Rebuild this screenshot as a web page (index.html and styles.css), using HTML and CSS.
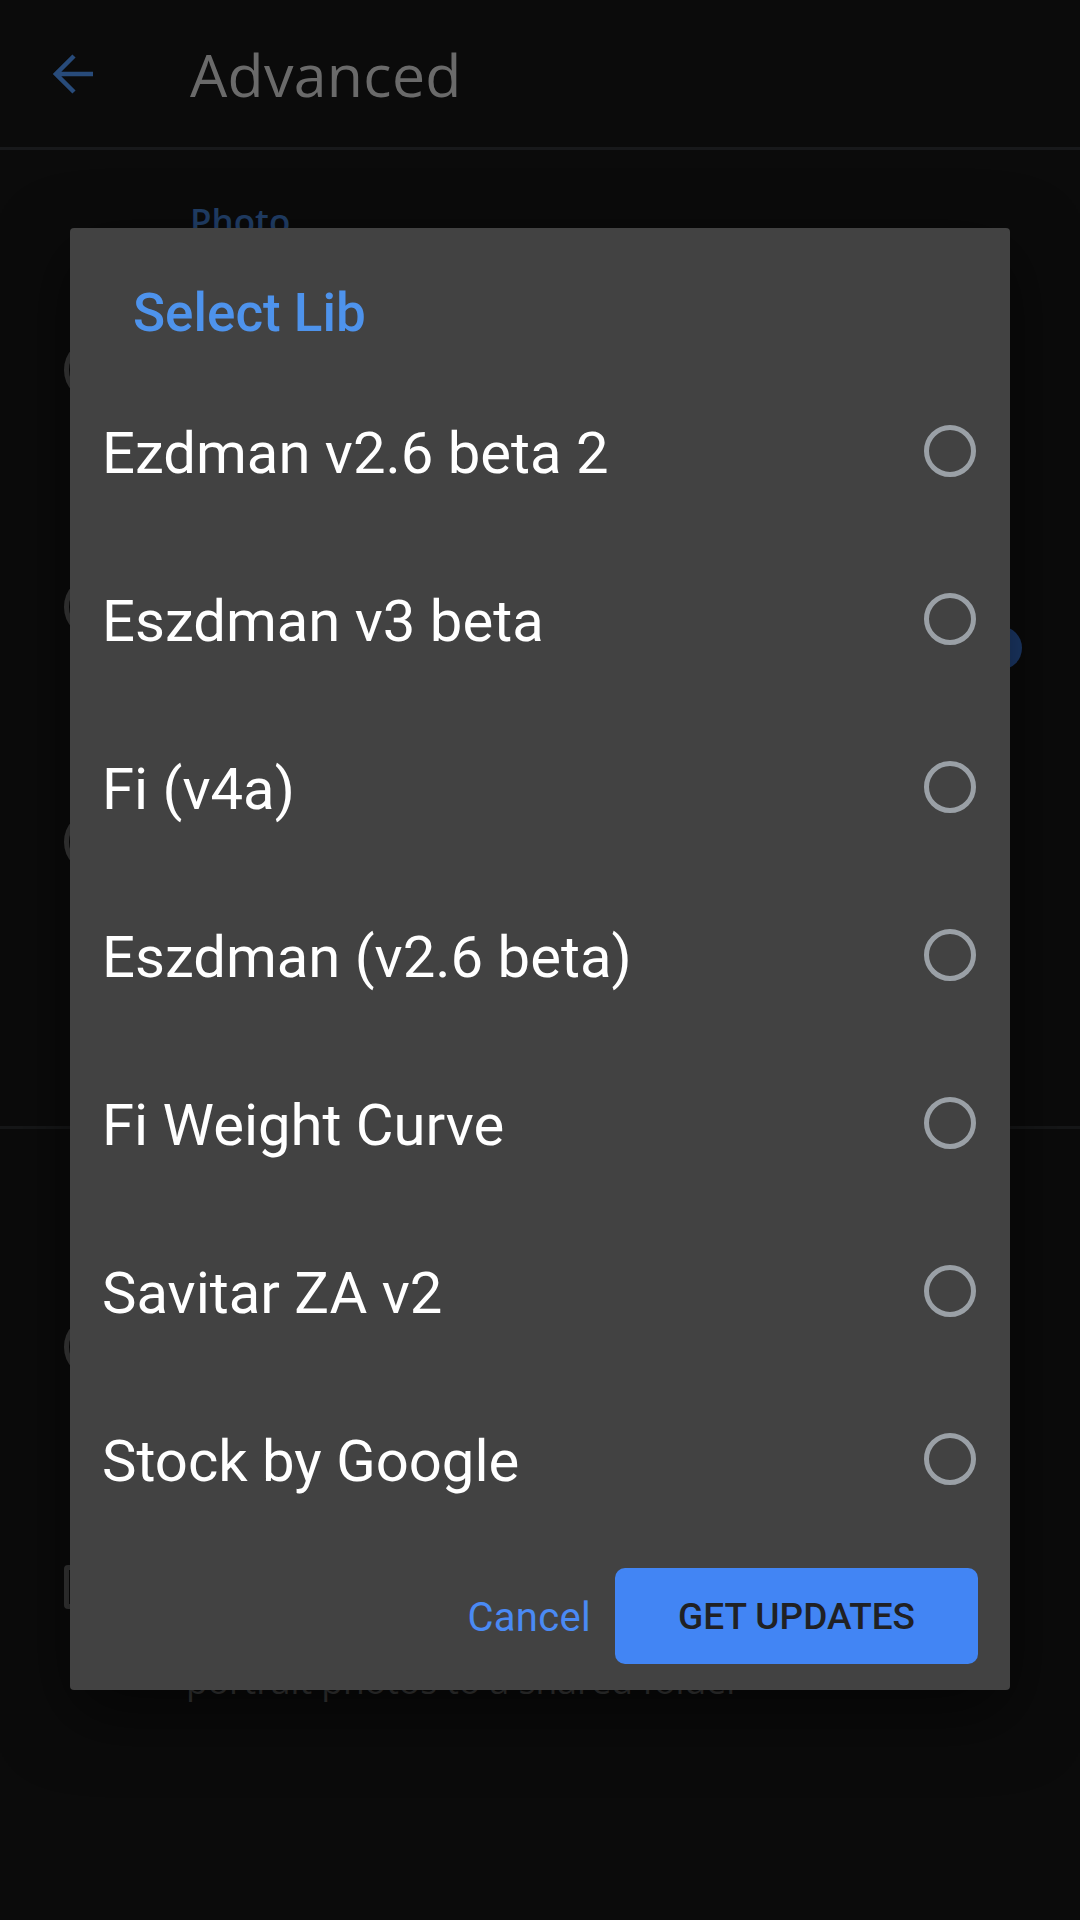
FILE: index.html
```html
<!DOCTYPE html>
<html>
<head>
<meta charset="utf-8">
<link rel="stylesheet" href="styles.css">
</head>
<body>
<div class="screen">
  <header class="appbar">
    <svg class="back" width="42" height="42" viewBox="0 0 42 42"><path d="M40 21H4M21 3L3 21l18 18" fill="none" stroke="#284b7a" stroke-width="4.5"/></svg>
    <h1 class="appbar-title">Advanced</h1>
  </header>
  <main class="content">
    <div class="section-label">Photo</div>
    <div class="setting s1"><span class="ring"></span></div>
    <div class="setting s2"><span class="ring"></span><span class="grow"></span><span class="thumb"></span></div>
    <div class="setting s3"><span class="ring"></span></div>
    <div class="divider"></div>
    <div class="setting s4"><span class="ring"></span></div>
    <div class="setting s5">
      <span class="square"></span>
      <div class="summary">portrait photos to a shared folder</div>
    </div>
  </main>

  <div class="dialog">
    <h2 class="dlg-title">Select Lib</h2>
    <ul class="options">
      <li class="option"><span class="opt-text">Ezdman v2.6 beta 2</span><span class="radio"></span></li>
      <li class="option"><span class="opt-text">Eszdman v3 beta</span><span class="radio"></span></li>
      <li class="option"><span class="opt-text">Fi (v4a)</span><span class="radio"></span></li>
      <li class="option"><span class="opt-text">Eszdman (v2.6 beta)</span><span class="radio"></span></li>
      <li class="option"><span class="opt-text">Fi Weight Curve</span><span class="radio"></span></li>
      <li class="option"><span class="opt-text">Savitar ZA v2</span><span class="radio"></span></li>
      <li class="option"><span class="opt-text">Stock by Google</span><span class="radio"></span></li>
    </ul>
    <div class="actions">
      <span class="btn-text">Cancel</span>
      <span class="btn-primary">GET UPDATES</span>
    </div>
  </div>
</div>
</body>
</html>
```

FILE: styles.css
```css
* { box-sizing: border-box; }
html, body { margin: 0; padding: 0; }
body {
  width: 1080px;
  height: 1920px;
  background: #0b0b0b;
  font-family: Roboto, "Liberation Sans", sans-serif;
  overflow: hidden;
}
.screen {
  position: relative;
  width: 1080px;
  height: 1920px;
  background: #0b0b0b;
}

/* ---------- app behind the dialog ---------- */
.appbar {
  height: 150px;
  display: flex;
  align-items: center;
  padding-left: 53px;
  border-bottom: 3px solid #18191b;
}
.back { display: block; flex: none; }
.appbar-title {
  margin: 0 0 0 95px;
  font-family: "Open Sans", "Noto Sans", sans-serif;
  font-weight: 400;
  font-size: 59px;
  line-height: 70px;
  color: #6a6a6a;
  letter-spacing: 0.3px;
}
.content { display: flex; flex-direction: column; }
.section-label {
  height: 100px;
  padding: 46px 0 0 190px;
  font-family: "Open Sans", "Noto Sans", sans-serif;
  font-weight: 600;
  font-size: 35px;
  line-height: 50px;
  color: #213f68;
}
.setting {
  display: flex;
  align-items: center;
  padding-left: 64px;
  padding-right: 58px;
}
.s1 { height: 240px; }
.s2 { height: 232px; align-items: flex-start; padding-top: 86px; }
.s3 { height: 240px; }
.s4 { height: 436px; }
.s5 { height: 300px; align-items: flex-start; padding-top: 0; }
.grow { flex: 1; }
.ring {
  width: 62px;
  height: 62px;
  border-radius: 50%;
  border: 5px solid #3c3c3c;
  flex: none;
}
.thumb {
  width: 44px;
  height: 44px;
  border-radius: 50%;
  background: #1d3b6c;
  margin-top: 50px;
  flex: none;
}
.divider { height: 167px; border-bottom: 3px solid #161718; }
.square {
  width: 60px;
  height: 44px;
  border: 5px solid #383838;
  border-radius: 4px;
  flex: none;
}
.summary {
  margin: 95px 0 0 62px;
  font-family: "Open Sans", "Noto Sans", sans-serif;
  font-size: 35.5px;
  line-height: 40px;
  color: #3c3c3c;
}

/* ---------- dialog ---------- */
.dialog {
  position: absolute;
  left: 70px;
  top: 228px;
  width: 940px;
  height: 1462px;
  background: #424242;
  border-radius: 4px;
  box-shadow: 0 24px 70px rgba(0, 0, 0, 0.55);
  display: flex;
  flex-direction: column;
}
.dlg-title {
  margin: 0;
  padding: 52px 0 0 63px;
  font-size: 53px;
  line-height: 66px;
  font-weight: 500;
  color: #4e93ec;
}
.options {
  list-style: none;
  margin: 21px 0 0 0;
  padding: 0;
}
.option {
  height: 168px;
  display: flex;
  align-items: center;
  justify-content: space-between;
  padding: 0 34px 0 32px;
}
.opt-text {
  font-size: 58px;
  line-height: 70px;
  padding-top: 4px;
  color: #ffffff;
  font-weight: 400;
}
.radio {
  width: 52px;
  height: 52px;
  border-radius: 50%;
  border: 5px solid #9aa0a6;
  flex: none;
}
.actions {
  margin-top: 25px;
  display: flex;
  justify-content: flex-end;
  align-items: center;
  gap: 24px;
  padding-right: 32px;
}
.btn-text {
  font-size: 40px;
  font-weight: 400;
  color: #4a8af4;
  letter-spacing: 0.3px;
  padding-top: 3px;
}
.btn-primary {
  width: 363px;
  height: 96px;
  border-radius: 10px;
  background: #4285f4;
  color: #202124;
  font-size: 37px;
  font-weight: 500;
  display: flex;
  align-items: center;
  justify-content: center;
}
```
